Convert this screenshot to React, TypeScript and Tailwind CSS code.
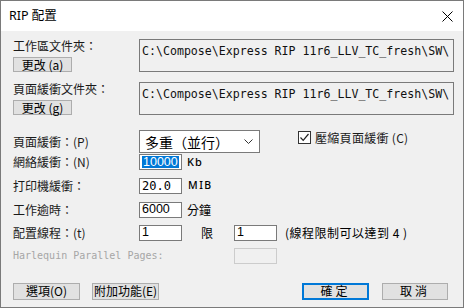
import React from "react";

const cjk = '"Noto Sans CJK TC", "Noto Sans CJK SC", sans-serif';
const ui = '"Noto Sans", "Noto Sans CJK TC", sans-serif';
const mono = '"DejaVu Sans Mono", "Noto Sans CJK TC", monospace';

function Btn({
  children,
  className = "",
  primary = false,
}: {
  children: React.ReactNode;
  className?: string;
  primary?: boolean;
}) {
  return (
    <div
      className={
        "flex items-center justify-center bg-[#e1e1e1] text-[12px] leading-none text-black " +
        (primary ? "border-2 border-[#0078d7] " : "border border-[#adadad] ") +
        className
      }
      style={{ fontFamily: cjk }}
    >
      {children}
    </div>
  );
}

function Field({
  children,
  className = "",
  disabled = false,
}: {
  children?: React.ReactNode;
  className?: string;
  disabled?: boolean;
}) {
  return (
    <div
      className={
        "flex h-[16px] w-[43px] items-center border pl-[2px] text-[12.5px] leading-none " +
        (disabled ? "border-[#cccccc] bg-[#f0f0f0] " : "border-[#7a7a7a] bg-white ") +
        className
      }
      style={{ fontFamily: '"Liberation Sans", sans-serif' }}
    >
      {children}
    </div>
  );
}

function Label({ children }: { children: React.ReactNode }) {
  return (
    <div className="w-[126px] text-[12px] leading-[14px] text-[#1a1a1a]" style={{ fontFamily: cjk }}>
      {children}
    </div>
  );
}

export default function App() {
  const path = "C:\\Compose\\Express RIP 11r6_LLV_TC_fresh\\SW\\";

  return (
    <div className="flex h-[308px] w-[464px] flex-col border border-[#7a7a7a] bg-[#f0f0f0] text-black">
      {/* title bar */}
      <div className="flex h-[30px] shrink-0 items-center justify-between bg-white pl-[8px] pr-[10px]">
        <span className="text-[12.5px] leading-none" style={{ fontFamily: ui }}>
          RIP 配置
        </span>
        <svg width="11" height="11" viewBox="0 0 11 11" className="mt-[1px]">
          <path d="M0.5 0.5 L10.5 10.5 M10.5 0.5 L0.5 10.5" stroke="#000" strokeWidth="1" />
        </svg>
      </div>

      <div className="flex flex-1 flex-col pl-[12px]">
        {/* folder 1 */}
        <div className="mt-[8px] flex">
          <div className="flex w-[126px] flex-col">
            <Label>工作區文件夾：</Label>
            <Btn className="mt-[4px] h-[15px] w-[59px]">更改 (a)</Btn>
          </div>
          <div
            className="h-[33px] w-[315px] border border-[#7a7a7a] bg-[#f0f0f0] pl-[2px] pt-[4px] text-[11.6px] leading-[14px] whitespace-nowrap overflow-hidden text-[#111]"
            style={{ fontFamily: mono }}
          >
            {path}
          </div>
        </div>

        {/* folder 2 */}
        <div className="mt-[10px] flex">
          <div className="flex w-[126px] flex-col">
            <Label>頁面緩衝文件夾：</Label>
            <Btn className="mt-[4px] h-[15px] w-[59px]">更改 (g)</Btn>
          </div>
          <div
            className="h-[33px] w-[315px] border border-[#7a7a7a] bg-[#f0f0f0] pl-[2px] pt-[4px] text-[11.6px] leading-[14px] whitespace-nowrap overflow-hidden text-[#111]"
            style={{ fontFamily: mono }}
          >
            {path}
          </div>
        </div>

        {/* page buffer */}
        <div className="mt-[15px] flex items-center">
          <Label>頁面緩衝：(P)</Label>
          <div className="flex h-[23px] w-[121px] items-center justify-between border border-[#7a7a7a] bg-white pl-[5px] pr-[6px]">
            <span className="text-[14px] leading-none" style={{ fontFamily: cjk }}>
              多重（並行）
            </span>
            <svg width="9" height="5" viewBox="0 0 9 5">
              <path d="M0.5 0.5 L4.5 4.5 L8.5 0.5" fill="none" stroke="#333" strokeWidth="1" />
            </svg>
          </div>
          <div className="ml-[38px] mb-[8px] flex items-center">
            <div className="flex h-[13px] w-[13px] items-center justify-center border border-[#333] bg-white">
              <svg width="11" height="11" viewBox="0 0 11 11">
                <path d="M1.5 5.5 L4.2 8.3 L9.5 2" fill="none" stroke="#222" strokeWidth="1.2" />
              </svg>
            </div>
            <span className="ml-[4px] text-[12px] leading-none text-[#1a1a1a] tracking-[0.3px]" style={{ fontFamily: cjk }}>
              壓縮頁面緩衝 (C)
            </span>
          </div>
        </div>

        {/* network buffer */}
        <div className="mt-[1px] flex items-center">
          <Label>網絡緩衝：(N)</Label>
          <Field>
            <span className="bg-[#0078d7] px-[1px] leading-[12px] text-white">10000</span>
          </Field>
          <span className="ml-[5px] text-[11px] font-medium tracking-[1px]" style={{ fontFamily: ui }}>
            Kb
          </span>
        </div>

        {/* printer buffer */}
        <div className="mt-[7px] flex items-center">
          <Label>打印機緩衝：</Label>
          <Field>
            <span className="text-[12px]" style={{ fontFamily: mono }}>
              20.0
            </span>
          </Field>
          <span className="ml-[6px] text-[10.5px] font-medium tracking-[1.5px]" style={{ fontFamily: ui }}>
            MIB
          </span>
        </div>

        {/* timeout */}
        <div className="mt-[8px] flex items-center">
          <Label>工作逾時：</Label>
          <Field>6000</Field>
          <span className="ml-[5px] text-[12px] leading-none" style={{ fontFamily: cjk }}>
            分鐘
          </span>
        </div>

        {/* threads */}
        <div className="mt-[7px] flex items-center">
          <Label>配置線程：(t)</Label>
          <Field>1</Field>
          <span className="ml-[19px] text-[12px] leading-none" style={{ fontFamily: cjk }}>
            限
          </span>
          <Field className="ml-[21px]">1</Field>
          <span className="ml-[8px] text-[12px] leading-none tracking-[0.5px]" style={{ fontFamily: cjk }}>
            (線程限制可以達到 4 )
          </span>
        </div>

        {/* harlequin */}
        <div className="mt-[7px] flex items-center">
          <div
            className="w-[221px] text-[10px] leading-none text-[#a6a6a6]"
            style={{ fontFamily: mono }}
          >
            Harlequin Parallel Pages:
          </div>
          <Field disabled />
        </div>

        {/* bottom buttons */}
        <div className="mt-[19px] flex">
          <Btn className="h-[17px] w-[67px]">選項(O)</Btn>
          <Btn className="ml-[12px] h-[17px] w-[67px]">附加功能(E)</Btn>
          <Btn primary className="ml-[143px] h-[17px] w-[67px] tracking-[3px]">
            確定
          </Btn>
          <Btn className="ml-[13px] h-[17px] w-[66px] tracking-[3px]">取消</Btn>
        </div>
      </div>
    </div>
  );
}
